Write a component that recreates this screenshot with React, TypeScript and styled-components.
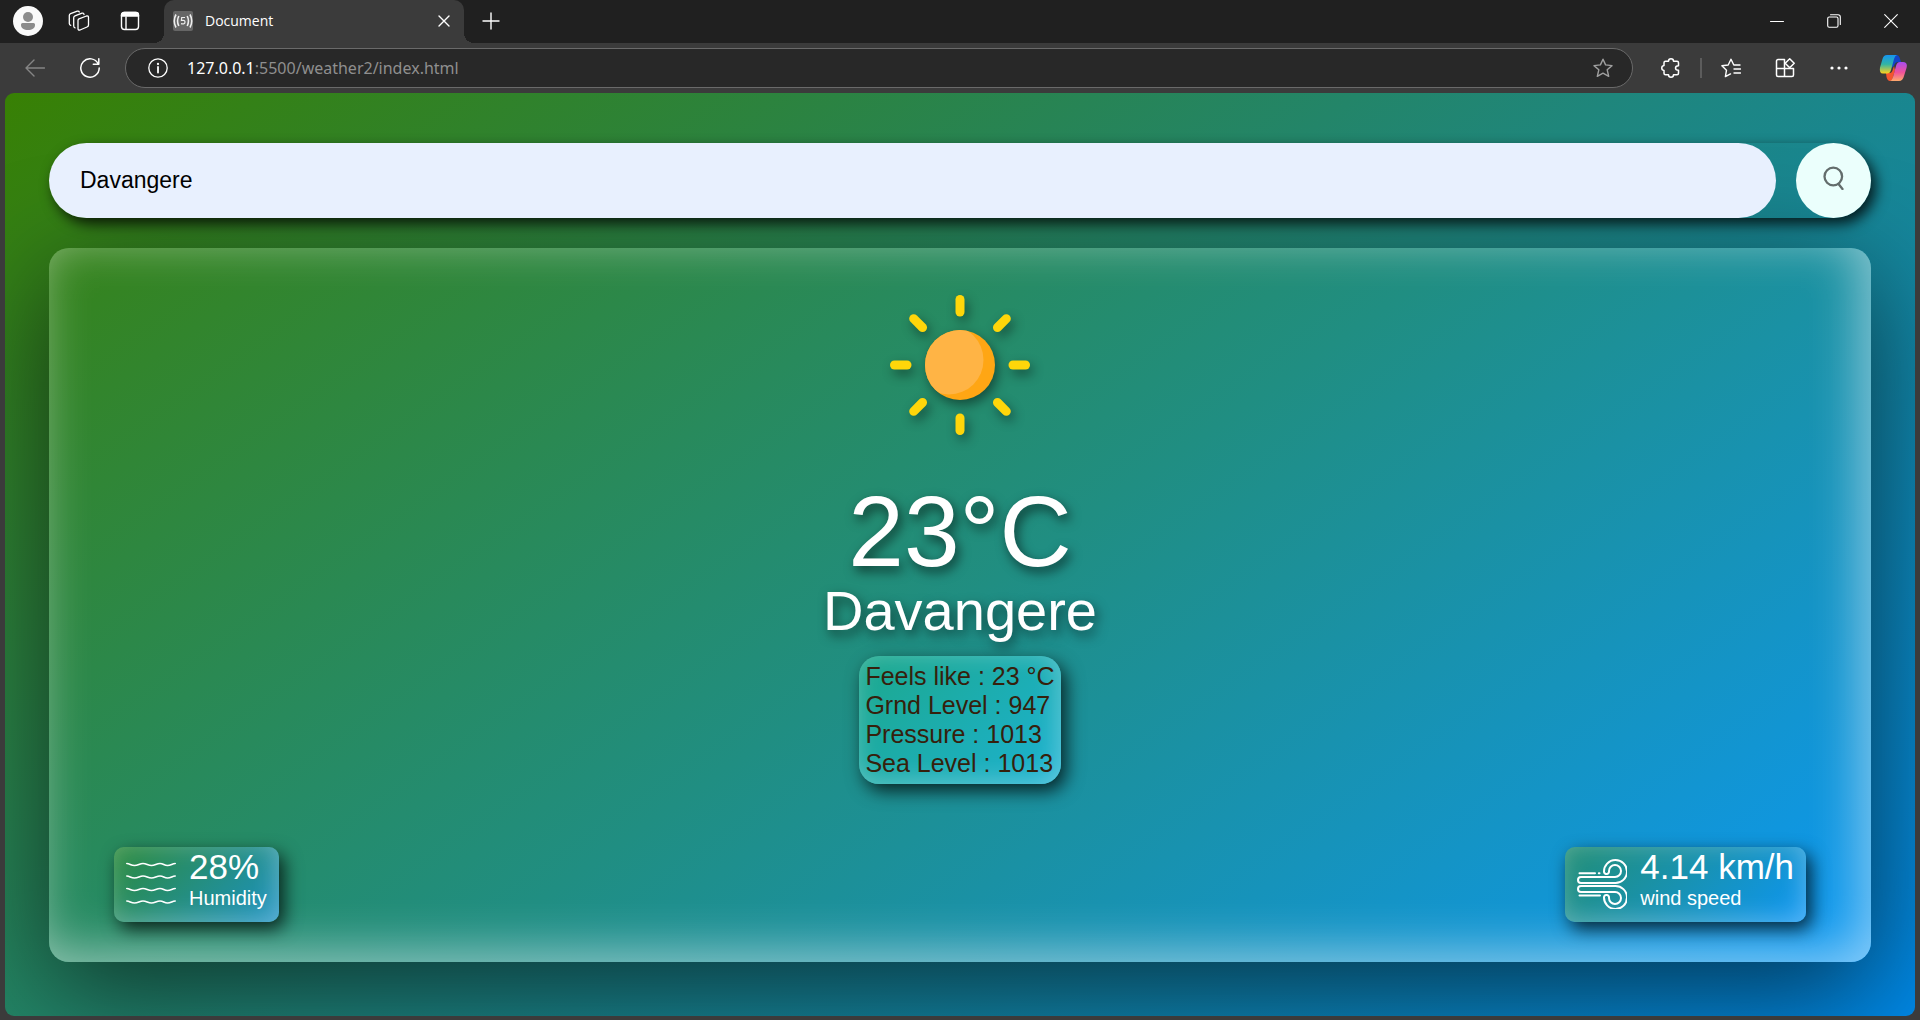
import React from "react";
import styled, { createGlobalStyle, css } from "styled-components";

const Global = createGlobalStyle`
  *, *::before, *::after { box-sizing: border-box; }
  html, body, #root { height: 100%; }
  body { margin: 0; background: #3b3b3b; }
  button, input { font: inherit; color: inherit; border: 0; padding: 0; background: none; outline: none; }
  p, h1, h2, dl, dt, dd { margin: 0; font-weight: 400; }
`;

const Window = styled.div`
  min-height: 100%;
  display: flex;
  flex-direction: column;
  background: #3b3b3b;
  font-family: "Open Sans", "Noto Sans", sans-serif;
`;

const TitleBar = styled.header`
  display: flex;
  align-items: stretch;
  height: 43px;
  background: #202020;
  color: #fff;
`;

const TitleTools = styled.div`
  display: flex;
  align-items: center;
  width: 164px;
  padding: 0 0 2px 13px;
  gap: 21px;
`;

const IconButton = styled.button<{ $size?: number; $color?: string }>`
  display: grid;
  place-items: center;
  flex: none;
  width: ${(p) => p.$size ?? 30}px;
  height: 30px;
  color: ${(p) => p.$color ?? "#fff"};
  svg { display: block; }
`;

const flare = css`
  content: "";
  position: absolute;
  bottom: 0;
  width: 10px;
  height: 10px;
`;

const Tab = styled.div`
  position: relative;
  display: flex;
  align-items: center;
  width: 300px;
  padding: 0 9px 2px;
  border-radius: 10px 10px 0 0;
  background: #3b3b3b;
  font-size: 14px;
  &::before { ${flare} right: 100%; background: radial-gradient(circle at 0 0, #202020 10px, #3b3b3b 10px); }
  &::after { ${flare} left: 100%; background: radial-gradient(circle at 100% 0, #202020 10px, #3b3b3b 10px); }
`;

const TabTitle = styled.span`
  flex: 1;
  padding-left: 12px;
`;

const NewTab = styled.div`
  display: flex;
  align-items: center;
  padding: 0 0 2px 12px;
`;

const WindowButtons = styled.div`
  display: flex;
  margin-left: auto;
  padding: 0 1px 2px 0;
  align-items: center;
`;

const ToolBar = styled.nav`
  display: flex;
  align-items: center;
  height: 50px;
  padding: 0 12px 0 20px;
  color: #fff;
`;

const NavButtons = styled.div`
  display: flex;
  gap: 25px;
`;

const AddressBar = styled.div`
  display: flex;
  align-items: center;
  flex: 1;
  height: 40px;
  margin: 0 23px 0 20px;
  padding: 0 14px 0 17px;
  border: 1px solid #6a6a6a;
  border-radius: 20px;
  background: #282828;
  font-size: 16px;
`;

const Address = styled.p`
  flex: 1;
  padding-left: 14px;
  color: #8f8f8f;
  font-family: "Noto Sans", sans-serif;
  b { font-weight: 400; color: #fff; }
`;

const ToolIcons = styled.div`
  display: flex;
  align-items: center;
  gap: 24px;
`;

const Divider = styled.span`
  width: 2px;
  height: 20px;
  margin: 0 -10px;
  background: #5c5c5c;
`;

const Page = styled.main`
  flex: 1;
  display: flex;
  flex-direction: column;
  gap: 30px;
  margin: 0 5px 4px;
  padding: 50px 44px 54px;
  border-radius: 9px;
  overflow: hidden;
  background: linear-gradient(145deg, #388004, #1f867c 50%, #0087e5);
  font-family: "Liberation Sans", Arial, sans-serif;
  color: #fff;
`;

const Search = styled.form`
  position: relative;
  z-index: 1;
  display: flex;
  gap: 20px;
  border-radius: 38px;
  box-shadow: 5px 6px 14px rgba(0, 0, 0, 0.8);
`;

const SearchInput = styled.input`
  flex: 1;
  min-width: 0;
  height: 75px;
  padding: 0 31px;
  border-radius: 38px;
  background: #e8f0fe;
  color: #000;
  font-size: 23px;
`;

const SearchButton = styled.button`
  width: 75px;
  height: 75px;
  display: grid;
  place-items: center;
  padding-bottom: 6px;
  border-radius: 50%;
  background: #ebfffc;
`;

const Weather = styled.section`
  flex: 1;
  display: flex;
  flex-direction: column;
  align-items: center;
  padding: 42px 65px 40px;
  border-radius: 20px;
  background: linear-gradient(145deg, #36831a, #208e82 50%, #0c98f4);
  box-shadow:
    0 30px 110px rgba(0, 0, 0, 0.6),
    inset -10px -10px 50px rgba(255, 255, 255, 0.5);
`;

const Sun = styled.svg`
  display: block;
  filter: drop-shadow(3px 5px 6px rgba(0, 0, 0, 0.45));
`;

const Temperature = styled.h1`
  margin-top: 39px;
  font-size: 100px;
  line-height: 104px;
  text-shadow: 3px 5px 12px rgba(0, 0, 0, 0.6);
`;

const City = styled.h2`
  font-size: 56px;
  line-height: 56px;
  text-shadow: 3px 5px 12px rgba(0, 0, 0, 0.6);
`;

const Readings = styled.dl`
  margin-top: 17px;
  padding: 6px;
  border-radius: 20px;
  background: linear-gradient(135deg, #1ca88c, #1cb2d2);
  box-shadow:
    5px 7px 18px rgba(0, 0, 0, 0.75),
    inset -3px -3px 25px rgba(255, 255, 255, 0.3);
  color: #36200c;
  font-size: 25px;
  line-height: 29px;
`;

const Reading = styled.div`
  display: flex;
  white-space: pre;
`;

const Stats = styled.div`
  display: flex;
  justify-content: space-between;
  align-self: stretch;
  margin-top: auto;
`;

const Stat = styled.article<{ $from: string; $to: string }>`
  display: flex;
  gap: 13px;
  height: 75px;
  padding: 0 12px;
  border-radius: 10px;
  background: linear-gradient(135deg, ${(p) => p.$from}, ${(p) => p.$to});
  box-shadow:
    5px 7px 18px rgba(0, 0, 0, 0.75),
    inset -3px -3px 25px rgba(255, 255, 255, 0.3);
  svg { flex: none; margin-top: 12px; }
`;

const StatValue = styled.p`
  font-size: 35px;
  line-height: 40px;
`;

const StatLabel = styled.p`
  font-size: 20px;
  line-height: 23px;
`;

const stroke = { fill: "none", stroke: "currentColor", strokeWidth: 1.4, strokeLinecap: "round", strokeLinejoin: "round" } as const;

const readings: [string, string][] = [
  ["Feels like", "23 °C"],
  ["Grnd Level", "947"],
  ["Pressure", "1013"],
  ["Sea Level", "1013"],
];

const SunIcon = () => (
  <Sun width="150" height="150" viewBox="-75 -75 150 150" role="img" aria-label="Clear">
    <clipPath id="disc"><circle r="35" /></clipPath>
    {[0, 45, 90, 135, 180, 225, 270, 315].map((a) => (
      <path key={a} transform={`rotate(${a})`} d="M0-53v-12.500" stroke="#ffd60a" strokeWidth="9" strokeLinecap="round" />
    ))}
    <circle r="35" fill="#ffa614" />
    <circle cx="-11" cy="-5" r="34.500" fill="#ffb445" clipPath="url(#disc)" />
  </Sun>
);

const HumidityIcon = () => (
  <svg width="50" height="50" viewBox="0 0 50 50" {...stroke} strokeWidth="1.700">
    {[5, 17.5, 30, 42.5].map((y) => (
      <path key={y} d={`M.800 ${y - 0.5}c3 0 4 2 7.700 2s5-2 8.500-2 5 2 8.500 2 5-2 8.500-2 4 2 7.500 2 4.700-2 7.700-2`} />
    ))}
  </svg>
);

const WindIcon = () => (
  <svg width="50" height="50" viewBox="0 0 50 50" {...stroke} strokeWidth="2">
    <path d="M2.500 14.300h15.500M21.800 14.300h.700M2.500 36.500h20.500" />
    <path d="M38 24H4a3 3 0 0 1 0-6h34a6 6 0 1 0-6-6a2.500 2.500 0 0 1-5 1A11.500 11.500 0 1 1 38 24Z" />
    <path d="M38 27H4a3 3 0 0 0 0 6h34a6 6 0 1 1-6 6a2.500 2.500 0 0 0-5-1A11.500 11.500 0 1 0 38 27Z" />
  </svg>
);

export default function App() {
  return (
    <Window>
      <Global />
      <TitleBar>
        <TitleTools>
          <IconButton aria-label="Profile">
            <svg width="30" height="30" viewBox="0 0 30 30"><circle cx="15" cy="15" r="15" fill="#fafafa" /><circle cx="15" cy="11" r="5" fill="#8c8c8c" /><path d="M9.500 17h11a1.500 1.500 0 0 1 1.500 1.500V19c0 3.200-3 5-7 5s-7-1.800-7-5v-.500A1.500 1.500 0 0 1 9.500 17z" fill="#8c8c8c" /></svg>
          </IconButton>
          <IconButton aria-label="Workspaces">
            <svg width="22" height="22" viewBox="0 0 22 22" {...stroke} strokeWidth="1.300"><path d="M11 8.800 18.500 6q2-.500 2 1.500V15q0 1.500-1.500 2L12 20q-2 .500-2-1.500v-8q0-1.300 1-1.700Z" /><path d="M7 17.800q-1.300-.300-1.300-1.800V7.700q0-1.300 1.300-1.800l7-2.700q1.800-.400 2 1.300" /><path d="M2.700 15.300Q1.300 15 1.300 13.500v-8q0-1.300 1.300-1.800l6.700-2.500q1.600-.400 2 .800" /></svg>
          </IconButton>
          <IconButton aria-label="Tab actions">
            <svg width="20" height="20" viewBox="0 0 20 20" {...stroke}><rect x="1.500" y="1.500" width="17" height="17" rx="3" /><path d="M1.500 5V4a2.500 2.500 0 0 1 2.500-2.500h12A2.500 2.500 0 0 1 18.500 4v1z" fill="currentColor" /><path d="M6 6v12" /></svg>
          </IconButton>
        </TitleTools>
        <Tab>
          <svg width="20" height="20" viewBox="0 0 20 20"><rect width="20" height="20" rx="2" fill="#666" /><g fill="none" stroke="#eee" strokeWidth="1.600"><path d="M3 3.500Q-.500 10 3 16.500M17 3.500q3.500 6.500 0 13M5.800 5q-2.500 5 0 10M14.200 5q2.500 5 0 10" /><path d="M12 6.500H8.700L8.400 9.500q3.600-.800 3.600 1.500 0 2.600-4 1.700" strokeWidth="1.200" /></g></svg>
          <TabTitle>Document</TabTitle>
          <IconButton $size={22} aria-label="Close tab"><svg width="12" height="12" viewBox="0 0 12 12" {...stroke}><path d="m1 1 10 10M11 1 1 11" /></svg></IconButton>
        </Tab>
        <NewTab>
          <IconButton aria-label="New tab"><svg width="18" height="18" viewBox="0 0 18 18" {...stroke}><path d="M9 1v16M1 9h16" /></svg></IconButton>
        </NewTab>
        <WindowButtons>
          <IconButton $size={57} aria-label="Minimize"><svg width="14" height="14" viewBox="0 0 14 14" {...stroke} strokeWidth="1"><path d="M.500 7.500h13" /></svg></IconButton>
          <IconButton $size={57} aria-label="Restore"><svg width="14" height="14" viewBox="0 0 14 14" {...stroke} strokeWidth="1.100"><rect x=".700" y="3" width="10.300" height="10.300" rx="1.500" /><path d="M3.500.700H11A2.300 2.300 0 0 1 13.300 3v7.500" /></svg></IconButton>
          <IconButton $size={57} aria-label="Close"><svg width="14" height="14" viewBox="0 0 14 14" {...stroke} strokeWidth="1.100"><path d="m.700.700 12.600 12.600M13.300.700.700 13.300" /></svg></IconButton>
        </WindowButtons>
      </TitleBar>
      <ToolBar>
        <NavButtons>
          <IconButton $color="#858585" aria-label="Back"><svg width="20" height="18" viewBox="0 0 20 18" {...stroke}><path d="M19.500 9H1M9 1 1 9l8 8" /></svg></IconButton>
          <IconButton aria-label="Refresh"><svg width="20" height="20" viewBox="0 0 20 20" {...stroke} strokeWidth="1.500"><path d="M18.300 6A9.200 9.200 0 1 0 19.200 10M18.800.800v5.500h-5.500" /></svg></IconButton>
        </NavButtons>
        <AddressBar>
          <IconButton aria-label="Site information"><svg width="20" height="20" viewBox="0 0 20 20" {...stroke} strokeWidth="1.300"><circle cx="10" cy="10" r="9.200" /><path d="M10 9v5.500" strokeWidth="1.800" /><circle cx="10" cy="6" r=".500" /></svg></IconButton>
          <Address><b>127.0.0.1</b>:5500/weather2/index.html</Address>
          <IconButton $color="#a0a0a0" aria-label="Add to favorites"><svg width="20" height="20" viewBox="0 0 20 20" {...stroke}><path d="m10 1.200 2.600 5.700 6.400.700-4.800 4.200 1.500 6.500L10 15.200l-5.700 3.100 1.500-6.500L1 7.600l6.400-.700z" /></svg></IconButton>
        </AddressBar>
        <ToolIcons>
          <IconButton aria-label="Extensions"><svg width="20" height="20" viewBox="0 0 20 20" {...stroke} strokeWidth="1.500"><path d="M4.500 3.300H7.500c0-3.400 5-3.400 5 0H16q1.500 0 1.500 1.500V7.700c-4 0-4 4.600 0 4.600v2.900q0 1.500-1.500 1.500h-3.500c0 3.400-5 3.400-5 0H4.500q-1.500 0-1.500-1.500V12.500c-3-.500-3-4.500 0-5V4.800q0-1.500 1.500-1.500Z" /></svg></IconButton>
          <Divider />
          <IconButton aria-label="Favorites"><svg width="20" height="20" viewBox="0 0 20 20" {...stroke}><path d="M19 7h-6.200L10 1.200 7.200 7 .900 7.800 5.500 12.200 4.400 18.600 9.500 15.900M13 11h6.500M13 15h6.500" /></svg></IconButton>
          <IconButton aria-label="Collections"><svg width="20" height="20" viewBox="0 0 20 20" {...stroke} strokeWidth="1.500"><path d="M9.500 1.500H3A1.500 1.500 0 0 0 1.500 3v14A1.500 1.500 0 0 0 3 18.500h14a1.500 1.500 0 0 0 1.500-1.500v-6.500h-17M9.500 1.500v17" /><path d="m14.700.800 4.500 4.500-4.500 4.500-4.500-4.500z" /></svg></IconButton>
          <IconButton aria-label="Settings and more"><svg width="18" height="4" viewBox="0 0 18 4"><g fill="#fff"><circle cx="2" cy="2" r="1.600" /><circle cx="9" cy="2" r="1.600" /><circle cx="16" cy="2" r="1.600" /></g></svg></IconButton>
          <IconButton aria-label="Copilot">
            <svg width="28" height="28" viewBox="0 0 28 28">
              <defs>
                <linearGradient id="cool" x1="0" y1="0" x2="0" y2="1"><stop offset="0" stopColor="#1594f0" /><stop offset=".5" stopColor="#32b5a4" /><stop offset="1" stopColor="#ffd21c" /></linearGradient>
                <linearGradient id="warm" x1="0" y1="0" x2="0" y2="1"><stop offset="0" stopColor="#a64cf0" /><stop offset=".55" stopColor="#f0529a" /><stop offset="1" stopColor="#ffaa6c" /></linearGradient>
              </defs>
              <path d="M13 1h4.500q2.500 0 3.500 4l1 3h-3q-3 0-4 4l-3 2z" fill="#1244c8" />
              <path d="M7 19h4q2 0 3-4l1-3 1 4-2 7q-1 4-3 4-2.500 0-3.500-4z" fill="#f4552e" />
              <path d="M8 1h10q-2 .500-3 4l-3 11q-1 3.500-4 3.500H4q-4 0-3-6L3.500 5Q4.500 1 8 1Z" fill="url(#cool)" />
              <path d="M20 27H11q2-.500 3-4l3-11q1-4 4-4h3q5 0 3.500 6L25 22q-1.200 5-5 5Z" fill="url(#warm)" />
            </svg>
          </IconButton>
        </ToolIcons>
      </ToolBar>
      <Page>
        <Search onSubmit={(e) => e.preventDefault()}>
          <SearchInput type="text" aria-label="City name" defaultValue="Davangere" spellCheck={false} />
          <SearchButton aria-label="Search">
            <svg width="21" height="24" viewBox="0 0 21 24" fill="none" stroke="#636d6c" strokeWidth="2.300" strokeLinecap="round"><circle cx="10.300" cy="10.500" r="8.800" /><path d="m15.500 18 4 5" /></svg>
          </SearchButton>
        </Search>
        <Weather>
          <SunIcon />
          <Temperature>23°C</Temperature>
          <City>Davangere</City>
          <Readings>
            {readings.map(([name, value]) => (
              <Reading key={name}><dt>{name} : </dt><dd>{value}</dd></Reading>
            ))}
          </Readings>
          <Stats>
            <Stat $from="#2c8a3c" $to="#1c92c4">
              <HumidityIcon />
              <div><StatValue>28%</StatValue><StatLabel>Humidity</StatLabel></div>
            </Stat>
            <Stat $from="#228e74" $to="#0d96f4">
              <WindIcon />
              <div><StatValue>4.14 km/h</StatValue><StatLabel>wind speed</StatLabel></div>
            </Stat>
          </Stats>
        </Weather>
      </Page>
    </Window>
  );
}
